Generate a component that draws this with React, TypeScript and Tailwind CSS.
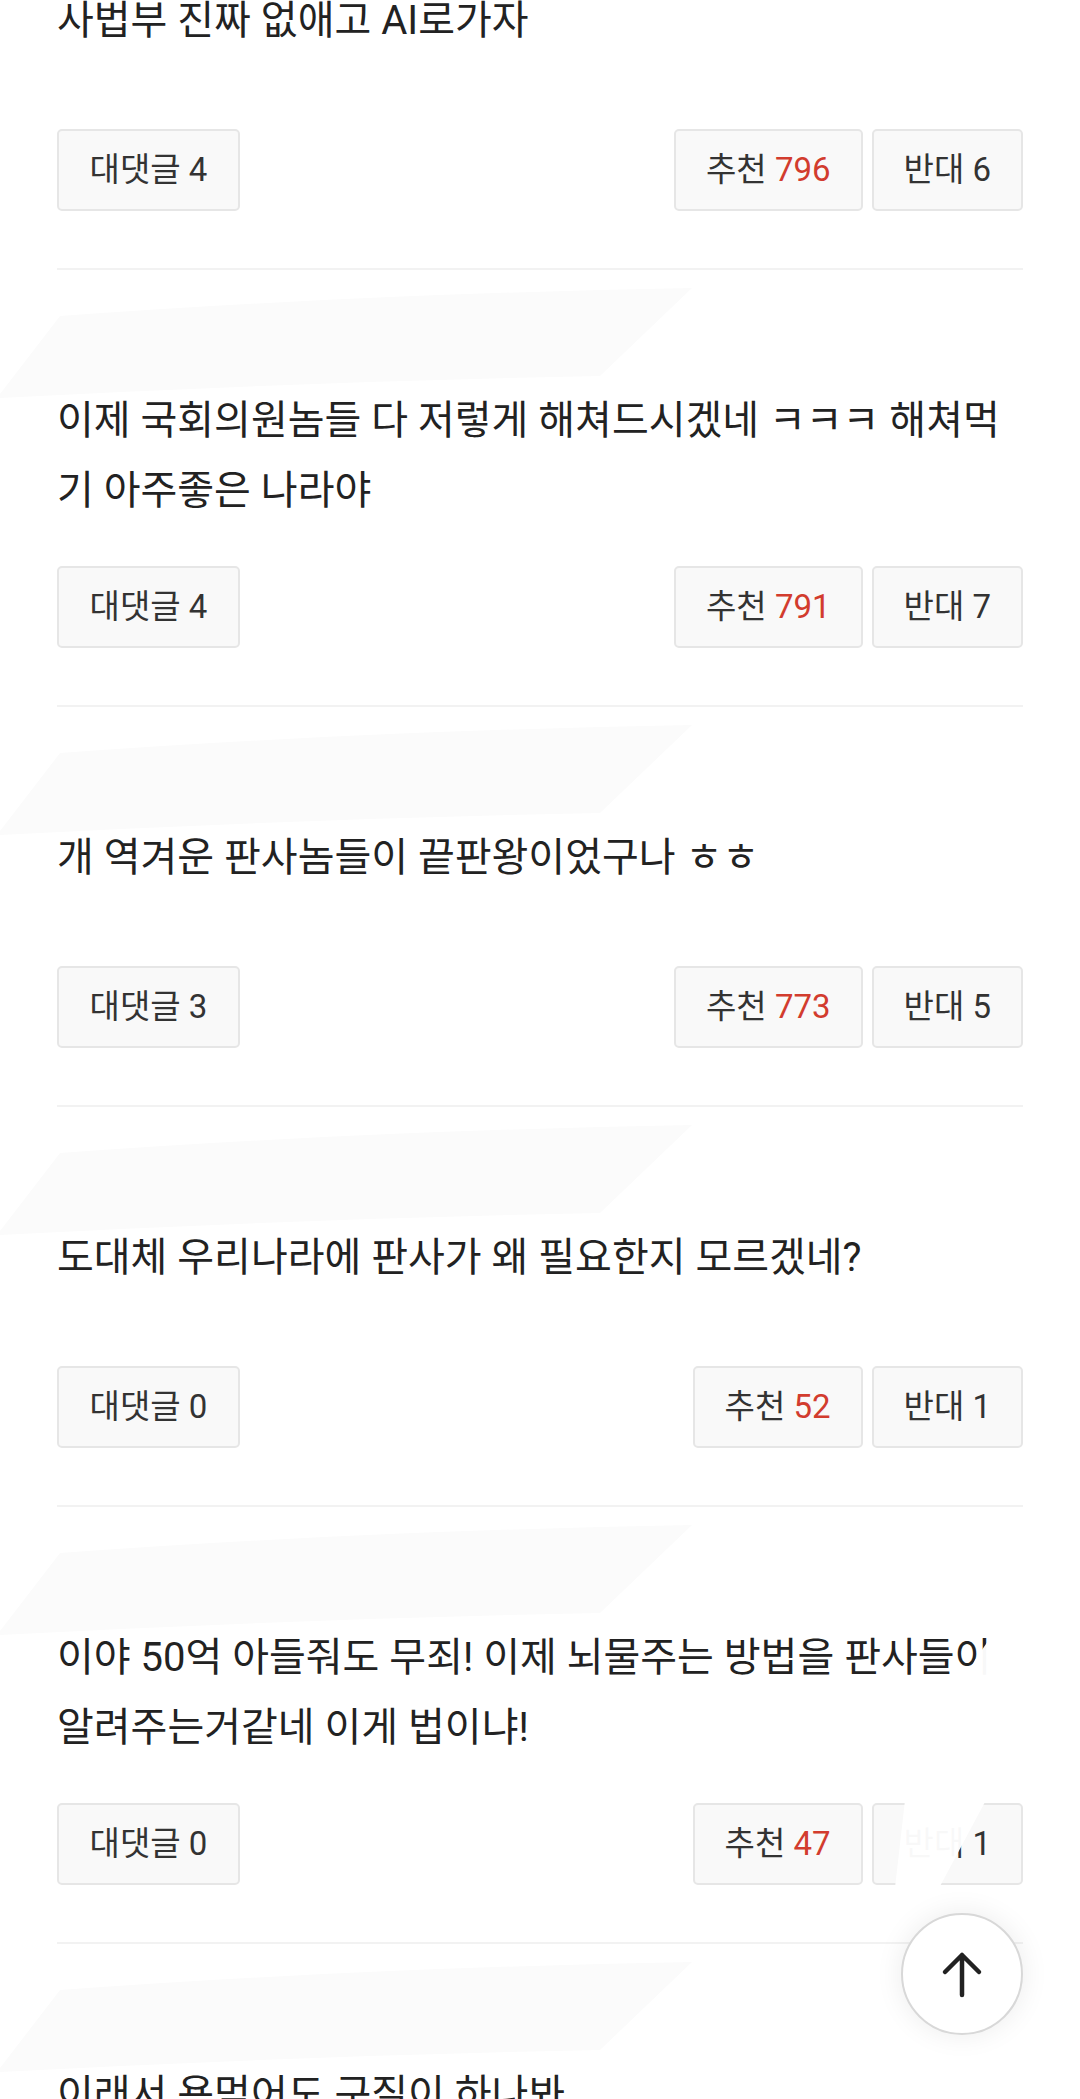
import React from "react";

type Comment = {
  text: string;
  replies: number;
  up: number;
  down: number;
};

const comments: Comment[] = [
  { text: "사법부 진짜 없애고 AI로가자", replies: 4, up: 796, down: 6 },
  {
    text: "이제 국회의원놈들 다 저렇게 해쳐드시겠네 ㅋㅋㅋ 해쳐먹기 아주좋은 나라야",
    replies: 4,
    up: 791,
    down: 7,
  },
  { text: "개 역겨운 판사놈들이 끝판왕이었구나 ㅎㅎ", replies: 3, up: 773, down: 5 },
  { text: "도대체 우리나라에 판사가 왜 필요한지 모르겠네?", replies: 0, up: 52, down: 1 },
  {
    text: "이야 50억 아들줘도 무죄! 이제 뇌물주는 방법을 판사들이 알려주는거같네 이게 법이냐!",
    replies: 0,
    up: 47,
    down: 1,
  },
  { text: "이래서 욕먹어도 구질이 하나봐", replies: 0, up: 31, down: 0 },
];

const Swoosh = () => (
  <svg
    className="block -ml-[57px] h-[116px] w-[700px] overflow-visible"
    viewBox="0 0 700 116"
    aria-hidden="true"
  >
    <path
      d="M60 46 Q 360 24 692 18 L 600 106 Q 300 112 0 128 L 0 124 Z"
      fill="#fbfbfb"
    />
  </svg>
);

const Btn = ({ children, wide }: { children: React.ReactNode; wide?: boolean }) => (
  <div
    className={`flex h-[82px] items-center justify-center rounded-[5px] border-2 border-[#e6e6e6] bg-[#f9f9f9] text-[33px] text-[#333] ${
      wide ? "w-[183px]" : "px-[30px]"
    }`}
  >
    {children}
  </div>
);

const CommentItem = ({ c, first }: { c: Comment; first?: boolean }) => (
  <div className={`border-b-2 border-[#f2f2f2] pb-[57px] ${first ? "-mt-[14px]" : ""}`}>
    {!first && <Swoosh />}
    <p className="min-h-[103px] text-[40px] leading-[70px] text-[#222]">{c.text}</p>
    <div className="mt-[40px] flex items-center justify-between">
      <Btn wide>대댓글 {c.replies}</Btn>
      <div className="flex gap-[9px]">
        <Btn>
          추천&nbsp;<span className="text-[#d23c2e]">{c.up}</span>
        </Btn>
        <Btn>반대 {c.down}</Btn>
      </div>
    </div>
  </div>
);

export default function App() {
  return (
    <div className="relative h-[2099px] overflow-hidden bg-white font-['Roboto','Noto_Sans_CJK_KR',sans-serif]">
      <div className="px-[57px]">
        {comments.map((c, i) => (
          <CommentItem key={i} c={c} first={i === 0} />
        ))}
      </div>

      {/* white brush stroke over the corner */}
      <svg
        className="pointer-events-none absolute left-0 top-0 h-[2099px] w-[1080px]"
        viewBox="0 0 1080 2099"
        aria-hidden="true"
      >
        <path
          d="M1030 1580 L1080 1562 L1050 1660 L985 1802 L930 1905 L893 1905 L905 1800 L975 1660 Z"
          fill="#fff"
          fillOpacity="0.97"
        />
      </svg>

      <button className="absolute right-[57px] top-[1913px] flex h-[122px] w-[122px] items-center justify-center rounded-full border-2 border-[#d8d8d8] bg-white shadow-[0_0_28px_rgba(0,0,0,0.08)]">
        <svg width="44" height="50" viewBox="0 0 44 50" fill="none" aria-hidden="true">
          <path
            d="M22 6 V46 M5 23 L22 6 L39 23"
            stroke="#222"
            strokeWidth="4.5"
            strokeLinecap="round"
            strokeLinejoin="round"
          />
        </svg>
      </button>
    </div>
  );
}
